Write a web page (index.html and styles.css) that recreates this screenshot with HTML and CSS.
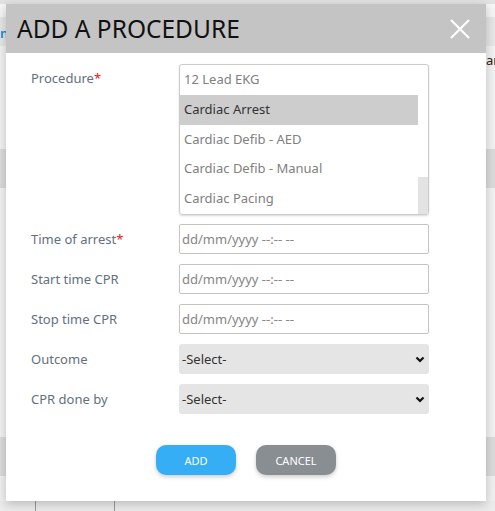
FILE: index.html
```html
<!DOCTYPE html>
<html>
<head>
<meta charset="utf-8">
<link rel="stylesheet" href="styles.css">
</head>
<body>
<div class="page">
  <div class="topstrip"></div>
  <div class="gap1"></div>
  <div class="band band-top"><span class="link">n</span></div>
  <div class="gap2"><span class="side-text">ar</span></div>
  <div class="band band-mid"></div>
  <div class="gap3"></div>
  <div class="band band-low"></div>
  <div class="gap4"></div>
  <div class="table-row"><span class="cell c1"></span><span class="cell c2"></span></div>
</div>

<div class="modal">
  <div class="modal-header">
    <h1 class="modal-title">ADD A PROCEDURE</h1>
    <svg class="close" width="20" height="20" viewBox="0 0 20 20"><path d="M1 1L19 19M19 1L1 19" stroke="#fff" stroke-width="2.2" fill="none"/></svg>
  </div>
  <div class="modal-body">
    <div class="row row-list">
      <label class="label">Procedure<span class="req">*</span></label>
      <div class="listbox">
        <div class="options">
          <div class="opt">12 Lead EKG</div>
          <div class="opt sel">Cardiac Arrest</div>
          <div class="opt">Cardiac Defib - AED</div>
          <div class="opt">Cardiac Defib - Manual</div>
          <div class="opt">Cardiac Pacing</div>
        </div>
        <div class="scrollbar"><div class="thumb"></div></div>
      </div>
    </div>
    <div class="row">
      <label class="label">Time of arrest<span class="req">*</span></label>
      <div class="input">dd/mm/yyyy --:-- --</div>
    </div>
    <div class="row">
      <label class="label">Start time CPR</label>
      <div class="input">dd/mm/yyyy --:-- --</div>
    </div>
    <div class="row">
      <label class="label">Stop time CPR</label>
      <div class="input">dd/mm/yyyy --:-- --</div>
    </div>
    <div class="row">
      <label class="label">Outcome</label>
      <div class="select"><span>-Select-</span><svg width="10" height="7" viewBox="0 0 10 7"><path d="M1.5 1.5L5 5L8.5 1.5" stroke="#111" stroke-width="2.2" fill="none"/></svg></div>
    </div>
    <div class="row">
      <label class="label">CPR done by</label>
      <div class="select"><span>-Select-</span><svg width="10" height="7" viewBox="0 0 10 7"><path d="M1.5 1.5L5 5L8.5 1.5" stroke="#111" stroke-width="2.2" fill="none"/></svg></div>
    </div>
    <div class="actions">
      <button class="btn btn-add">ADD</button>
      <button class="btn btn-cancel">CANCEL</button>
    </div>
  </div>
</div>
</body>
</html>
```
FILE: styles.css
```css
* { box-sizing: border-box; }
html, body { margin: 0; padding: 0; }
body {
  width: 495px;
  height: 511px;
  overflow: hidden;
  background: #f4f4f4;
  font-family: "Noto Sans", "Open Sans", sans-serif;
  position: relative;
}
.page { display: flex; flex-direction: column; }
.topstrip { height: 4px; background: #e2e2e2; }
.gap1 { height: 13px; background: #f6f6f6; }
.band-top { height: 29px; background: #e7e7e7; position: relative; }
.link { position: absolute; left: 0; top: 7px; font-size: 13px; color: #1a8fe0; font-weight: 600; }
.gap2 { height: 103px; background: #f3f3f3; position: relative; }
.side-text { position: absolute; left: 486px; top: 5px; font-size: 13px; color: #222; }
.band-mid { height: 39px; background: #dcdcdc; }
.gap3 { height: 249px; background: #f3f3f3; }
.band-low { height: 39px; background: #dcdcdc; }
.gap4 { height: 25px; background: #f1f1f1; }
.table-row { height: 20px; background: #ececec; display: flex; }
.cell { height: 100%; }
.c1 { width: 36px; border-right: 1px solid #999; }
.c2 { width: 79px; border-right: 1px solid #999; }

.modal {
  position: absolute;
  left: 6px;
  top: 4px;
  width: 480px;
  height: 497px;
  background: #fff;
  box-shadow: 0 3px 10px rgba(0,0,0,0.22);
}
.modal-header {
  height: 49px;
  background: #c4c4c4;
  display: flex;
  align-items: center;
  justify-content: space-between;
  padding: 0 16px 0 11px;
}
.modal-title {
  margin: 0;
  font-size: 24.5px;
  font-weight: 400;
  color: #111;
}
.close { display: block; }
.modal-body {
  padding: 11px 57px 0 25px;
  display: flex;
  flex-direction: column;
  gap: 10px;
}
.row { display: flex; align-items: center; height: 30px; }
.row-list { height: 150px; align-items: flex-start; }
.row-list .label { margin-top: 5px; }
.label {
  width: 148px;
  font-size: 13px;
  color: #627080;
}
.req { color: #e02020; }
.listbox {
  width: 250px;
  height: 151px;
  border: 1px solid #ccc;
  border-radius: 3px;
  box-shadow: 0 1px 2px rgba(0,0,0,0.15);
  display: flex;
  overflow: hidden;
}
.options { flex: 1; display: flex; flex-direction: column; }
.opt {
  height: 30px;
  line-height: 28px;
  padding-left: 4px;
  font-size: 13px;
  color: #808080;
}
.opt.sel { background: #cdcdcd; color: #333; }
.scrollbar { width: 10px; display: flex; flex-direction: column; justify-content: flex-end; }
.thumb { height: 37px; background: #e3e3e3; }
.input {
  width: 250px;
  height: 30px;
  border: 1px solid #c4c4c4;
  border-radius: 2px;
  font-size: 13px;
  color: #858585;
  line-height: 28px;
  padding-left: 2px;
}
.select {
  width: 250px;
  height: 30px;
  background: #e5e5e5;
  border-radius: 3px;
  display: flex;
  align-items: center;
  justify-content: space-between;
  padding: 0 4px 0 3px;
  font-size: 13px;
  color: #333;
}
.select svg { display: block; }
.actions {
  display: flex;
  justify-content: center;
  gap: 20px;
  margin-top: 21px;
  padding-left: 32px;
}
.btn {
  width: 80px;
  height: 30px;
  border: none;
  border-radius: 10px;
  color: #fff;
  font-family: "Noto Sans", "Open Sans", sans-serif;
  font-size: 11px;
  box-shadow: 0 2px 4px rgba(0,0,0,0.2);
  padding: 0;
}
.btn-add { background: #36aef5; }
.btn-cancel { background: #898e93; }
```
